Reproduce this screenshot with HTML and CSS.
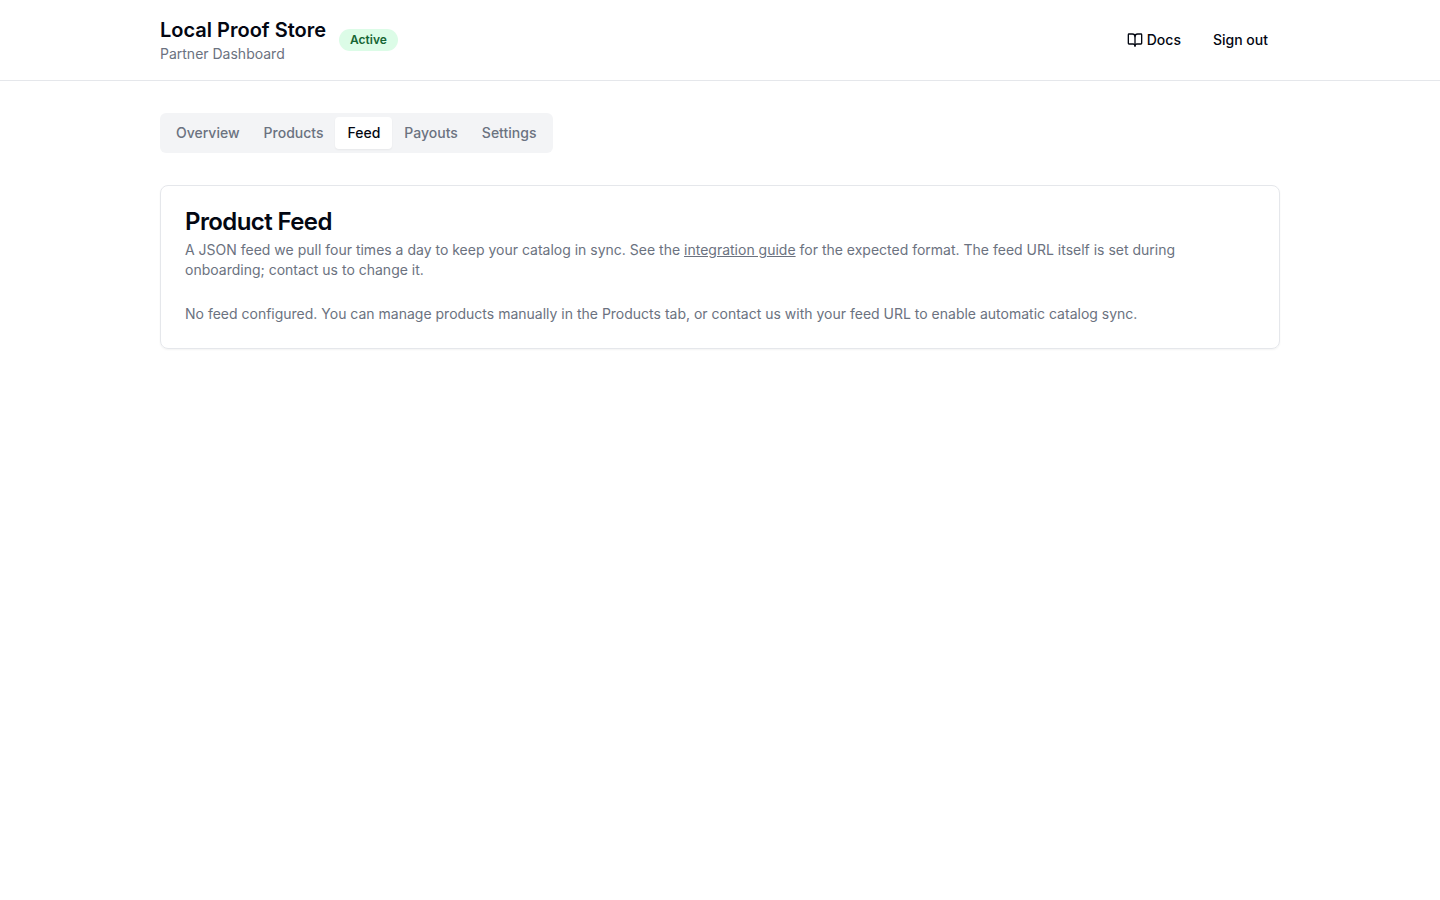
FILE: index.html
```html
<!DOCTYPE html>
<html>

<head>
<meta charset="UTF-8">
<title>Partner Dashboard</title>
<link rel="stylesheet" href="styles.css">
</head>

<body>

<header class="topbar">
   <div class="topbar-inner">
      <div class="brand">
         <div class="brand-text">
            <h1>Local Proof Store</h1>
            <p>Partner Dashboard</p>
         </div>
         <span class="badge">Active</span>
      </div>
      <nav class="actions">
         <a class="btn" href="#">
            <svg class="icon" viewBox="0 0 24 24" fill="none" stroke="currentColor" stroke-width="2" stroke-linecap="round" stroke-linejoin="round">
               <path d="M12 7v14"></path>
               <path d="M3 18a1 1 0 0 1-1-1V4a1 1 0 0 1 1-1h5a4 4 0 0 1 4 4 4 4 0 0 1 4-4h5a1 1 0 0 1 1 1v13a1 1 0 0 1-1 1h-6a3 3 0 0 0-3 3 3 3 0 0 0-3-3z"></path>
            </svg>
            Docs
         </a>
         <a class="btn" href="#">Sign out</a>
      </nav>
   </div>
</header>

<main class="content">
   <div class="tabs">
      <a class="tab" href="#">Overview</a>
      <a class="tab" href="#">Products</a>
      <a class="tab active" href="#">Feed</a>
      <a class="tab" href="#">Payouts</a>
      <a class="tab" href="#">Settings</a>
   </div>

   <section class="card">
      <h2>Product Feed</h2>
      <p class="desc">A JSON feed we pull four times a day to keep your catalog in sync. See the <a href="#">integration guide</a> for the expected format. The feed URL itself is set during onboarding; contact us to change it.</p>
      <p class="empty">No feed configured. You can manage products manually in the Products tab, or contact us with your feed URL to enable automatic catalog sync.</p>
   </section>
</main>

</body>
</html>
```

FILE: styles.css
```css
* {
   box-sizing: border-box;
}
body {
   margin: 0;
   background: #ffffff;
   color: #030712;
   font-family: 'Inter', sans-serif;
   font-size: 14px;
   line-height: 20px;
}
h1, h2, p {
   margin: 0;
}
a {
   color: inherit;
   text-decoration: none;
}
.topbar {
   border-bottom: 1px solid #e5e7eb;
}
.topbar-inner {
   max-width: 1152px;
   margin: 0 auto;
   padding: 16px;
   display: flex;
   align-items: center;
   justify-content: space-between;
}
.brand {
   display: flex;
   align-items: center;
   gap: 13px;
}
.brand-text h1 {
   font-size: 20px;
   line-height: 28px;
   font-weight: 600;
}
.brand-text p {
   color: #6b7280;
}
.badge {
   padding: 2px 11px;
   border-radius: 999px;
   background: #dcfce7;
   color: #166534;
   font-size: 12px;
   line-height: 18px;
   font-weight: 600;
}
.actions {
   display: flex;
   gap: 8px;
}
.btn {
   display: flex;
   align-items: center;
   gap: 4px;
   height: 40px;
   padding: 0 12px;
   border-radius: 6px;
   font-weight: 500;
}
.icon {
   width: 16px;
   height: 16px;
}
.content {
   max-width: 1152px;
   margin: 0 auto;
   padding: 32px 16px;
}
.tabs {
   display: inline-flex;
   height: 40px;
   padding: 4px 5px 4px 4px;
   margin-bottom: 32px;
   border-radius: 6px;
   background: #f3f4f6;
   vertical-align: top;
}
.tab {
   padding: 6px 12px;
   border-radius: 4px;
   color: #6b7280;
   font-weight: 500;
}
.tab.active {
   background: #ffffff;
   color: #030712;
   box-shadow: 0 1px 2px rgba(0, 0, 0, 0.05);
}
.card {
   padding: 24px;
   border: 1px solid #e5e7eb;
   border-radius: 8px;
   box-shadow: 0 1px 2px rgba(0, 0, 0, 0.05);
}
.card h2 {
   font-size: 24px;
   line-height: 24px;
   font-weight: 600;
   letter-spacing: -0.6px;
}
.desc {
   margin-top: 6px;
   color: #6b7280;
}
.desc a {
   text-decoration: underline;
}
.empty {
   margin-top: 24px;
   color: #6b7280;
}
```
